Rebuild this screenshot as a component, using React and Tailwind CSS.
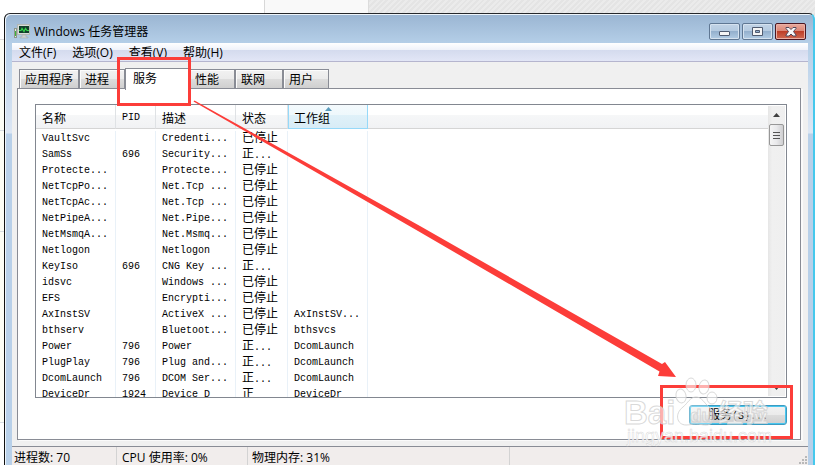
import React from "react";

const services = [
  ["VaultSvc", "", "Credenti...", "已停止", ""],
  ["SamSs", "696", "Security...", "正...", ""],
  ["Protecte...", "", "Protecte...", "已停止", ""],
  ["NetTcpPo...", "", "Net.Tcp ...", "已停止", ""],
  ["NetTcpAc...", "", "Net.Tcp ...", "已停止", ""],
  ["NetPipeA...", "", "Net.Pipe...", "已停止", ""],
  ["NetMsmqA...", "", "Net.Msmq...", "已停止", ""],
  ["Netlogon", "", "Netlogon", "已停止", ""],
  ["KeyIso", "696", "CNG Key ...", "正...", ""],
  ["idsvc", "", "Windows ...", "已停止", ""],
  ["EFS", "", "Encrypti...", "已停止", ""],
  ["AxInstSV", "", "ActiveX ...", "已停止", "AxInstSV..."],
  ["bthserv", "", "Bluetoot...", "已停止", "bthsvcs"],
  ["Power", "796", "Power", "正...", "DcomLaunch"],
  ["PlugPlay", "796", "Plug and...", "正...", "DcomLaunch"],
  ["DcomLaunch", "796", "DCOM Ser...", "正...", "DcomLaunch"],
  ["DeviceDr", "1924", "Device D", "正", "DeviceDr"],
];

const tabs = [
  { label: "应用程序", width: "w-[60px]" },
  { label: "进程", width: "w-[46px]" },
  { label: "服务", width: "w-[64px]", active: true },
  { label: "性能", width: "w-[46px]" },
  { label: "联网", width: "w-[48px]" },
  { label: "用户", width: "w-[46px]" },
];

function Backdrop() {
  return (
    <div className="absolute inset-0 bg-white">
      <div className="flex h-4">
        <div className="w-[264px] bg-white" />
        <div className="w-[104px] border-l border-[#d8d8d8] bg-[#f9f9f9]" />
        <div className="flex-1 border-l border-[#dcdcdc] bg-[repeating-linear-gradient(135deg,#e4e4e4_0px,#e4e4e4_2px,#ebebeb_2px,#ebebeb_4px)]" />
      </div>
      <div className="flex w-1 flex-col">
        <div className="h-6 border-b border-[#dddddd]" />
        <div className="h-[91px] border-b border-[#d8dde2] bg-[#fcfdf5]" />
        <div className="h-[101px] border-b border-[#d8dde2] bg-[#fcfdf5]" />
        <div className="h-[191px] border-b border-[#d8dde2] bg-[#fcfdf5]" />
      </div>
    </div>
  );
}

function AppIcon() {
  return (
    <svg width="17" height="15" viewBox="0 0 17 15" aria-hidden="true">
      <rect x="0.5" y="4.5" width="2" height="9" fill="#e5e9e2" stroke="#8d978c" />
      <rect x="1" y="7" width="1" height="5" fill="#3fb43b" />
      <rect x="3.5" y="0.5" width="12" height="10" fill="#d9dcd8" stroke="#b3b8b4" />
      <rect x="5" y="2" width="10" height="7" fill="#123f2b" />
      <path d="M5 6.5h2l1-2 2 3 1.5-3 1.5 2h2" fill="none" stroke="#35d24a" strokeWidth="1.2" />
      <path d="M8 11h4v2h2v1H6v-1h2z" fill="#cfd2d0" stroke="#a0a5a5" strokeWidth="0.5" />
    </svg>
  );
}

function CaptionButtons() {
  const base =
    "flex h-[17px] w-[31px] items-center justify-center rounded-[2px] border border-[#5f7793] bg-[linear-gradient(#c1d3e6_0%,#b4cae0_48%,#94b0cd_50%,#b2cce4_100%)] shadow-[inset_0_0_0_1px_#d5e2ef]";
  return (
    <div className="flex gap-[2px]">
      <button aria-label="最小化" className={base}>
        <svg width="12" height="10" viewBox="0 0 12 10">
          <rect x="0.5" y="4.5" width="10" height="4" rx="0.5" fill="#f5f5f5" stroke="#505b70" />
        </svg>
      </button>
      <button aria-label="最大化" className={base}>
        <svg width="12" height="10" viewBox="0 0 12 10">
          <path d="M.5.5h10v8H.5zM3.5 3.5v2h4v-2z" fill="#f5f5f5" fillRule="evenodd" stroke="#505b70" />
        </svg>
      </button>
      <button
        aria-label="关闭"
        className="flex h-[17px] w-[31px] items-center justify-center rounded-[2px] border border-[#4b1722] bg-[linear-gradient(#e9a99d_0%,#dc8777_45%,#bd3f29_50%,#cf6a52_100%)] shadow-[inset_0_0_0_1px_#eab0a5]"
      >
        <svg width="12" height="10" viewBox="0 0 12 10">
          <path
            d="M1 .5h3l2 2 2-2h3v1L8.5 4.500 11 8v1H8L6 7 4 9H1V8l2.500-3.500L1 1.500z"
            fill="#f8f8f8"
            stroke="#53485b"
          />
        </svg>
      </button>
    </div>
  );
}

function MenuBar() {
  return (
    <nav className="flex h-[19px] shrink-0 items-center gap-4 border-b border-[#b5b5ce] bg-[linear-gradient(#ffffff_0%,#eff2fa_38%,#d4dbee_40%,#e2e6f6_100%)] pl-[7px] font-['Open_Sans','Noto_Sans_CJK_SC',sans-serif]">
      {["文件(F)", "选项(O)", "查看(V)", "帮助(H)"].map((item) => (
        <button key={item} className="pt-[2px] leading-4 whitespace-nowrap">
          {item}
        </button>
      ))}
    </nav>
  );
}

function Tabs() {
  return (
    <div role="tablist" className="flex h-[21px] items-end pl-[2px]">
      {tabs.map((tab) => (
        <button
          key={tab.label}
          role="tab"
          aria-selected={Boolean(tab.active)}
          className={
            tab.active
              ? `${tab.width} relative -mb-[2px] flex h-[22px] items-start border border-b-0 border-[#898c95] bg-white pl-[7px] leading-[18px]`
              : `${tab.width} h-[19px] border border-b-0 border-[#898c95] bg-[linear-gradient(#f2f2f2_0%,#ebebeb_48%,#dddddd_50%,#cfcfcf_100%)] pl-[5px] text-left leading-[18px] shadow-[inset_1px_1px_0_#fcfcfc]`
          }
        >
          {tab.label}
        </button>
      ))}
    </div>
  );
}

function ServiceTable() {
  const head =
    "h-6 border-r border-b border-[#dfe2e5] border-b-[#d5d5d5] bg-[linear-gradient(#ffffff_0%,#ffffff_43%,#f6f7f8_45%,#f1f2f4_100%)] pt-[2px] pl-[6px] text-left font-normal";
  const cell = "h-4 overflow-hidden border-r border-[#e9f1f8] pl-[6px] whitespace-nowrap";
  return (
    <table className="w-full table-fixed border-separate border-spacing-0">
      <colgroup>
        <col className="w-[80px]" />
        <col className="w-[40px]" />
        <col className="w-[80px]" />
        <col className="w-[52px]" />
        <col className="w-[80px]" />
        <col />
      </colgroup>
      <thead>
        <tr>
          <th className={head}>名称</th>
          <th className={`${head} font-['Liberation_Mono',monospace] text-[10px]`}>PID</th>
          <th className={head}>描述</th>
          <th className={head}>状态</th>
          <th
            aria-sort="ascending"
            className="relative h-6 border-x border-b border-[#96d9f9] bg-[linear-gradient(#f4fafd_0%,#eef8fc_43%,#dff1f9_45%,#d8ecf6_100%)] pt-[2px] pl-[5px] text-left font-normal"
          >
            工作组
            <svg className="absolute top-[2px] left-[36px]" width="7" height="4" viewBox="0 0 7 4">
              <path d="M0 4 3.5 0 7 4z" fill="#5c9dbd" />
            </svg>
          </th>
          <th className="h-6 border-b border-[#d5d5d5] bg-[linear-gradient(#ffffff_0%,#ffffff_43%,#f6f7f8_45%,#f1f2f4_100%)]" />
        </tr>
      </thead>
      <tbody className="font-['Liberation_Mono','Noto_Sans_CJK_SC',monospace] text-[10px] leading-4">
        <tr aria-hidden="true">
          <td className="h-[2px]" colSpan={6} />
        </tr>
        {services.map((row) => (
          <tr key={row[0]}>
            <td className={cell}>{row[0]}</td>
            <td className={cell}>{row[1]}</td>
            <td className={cell}>{row[2]}</td>
            <td className={`${cell} leading-[15px]`}>
              <span className="text-[12px]">{row[3].replace("...", "")}</span>
              {row[3].endsWith("...") && "..."}
            </td>
            <td className={cell}>{row[4]}</td>
            <td />
          </tr>
        ))}
      </tbody>
    </table>
  );
}

function ScrollBar() {
  return (
    <div className="my-[1px] mr-[1px] flex w-[17px] shrink-0 flex-col items-center bg-[linear-gradient(90deg,#e6e6e6,#f0f0f0_25%,#efefef)]">
      <button aria-label="向上滚动" className="flex h-[18px] w-full items-center justify-center">
        <svg width="7" height="4" viewBox="0 0 7 4">
          <path d="M0 4 3.5 0 7 4z" fill="#404040" />
        </svg>
      </button>
      <div className="flex h-[22px] w-[15px] flex-col items-center justify-center gap-[2px] rounded-[2px] border border-[#979797] bg-[linear-gradient(90deg,#f5f5f5,#e9e9eb_50%,#cfcfd1)]">
        <div className="h-[1px] w-[7px] bg-[#555555]" />
        <div className="h-[1px] w-[7px] bg-[#555555]" />
        <div className="h-[1px] w-[7px] bg-[#555555]" />
      </div>
      <button aria-label="向下滚动" className="mt-auto flex h-[17px] w-full items-center justify-center">
        <svg width="7" height="4" viewBox="0 0 7 4">
          <path d="M0 0h7L3.5 4z" fill="#404040" />
        </svg>
      </button>
    </div>
  );
}

function StatusBar() {
  return (
    <footer className="flex h-[19px] shrink-0 border-t border-[#898c95] bg-[#f1edec] font-['Open_Sans','Noto_Sans_CJK_SC',sans-serif] leading-[22px] whitespace-nowrap">
      <div className="w-[105px] border-r border-[#d3d3d3] pl-[2px]">进程数: 70</div>
      <div className="w-[131px] border-r border-[#d3d3d3] pl-[5px]">CPU 使用率: 0%</div>
      <div className="w-[262px] border-r border-[#d3d3d3] pl-[4px]">物理内存: 31%</div>
      <svg className="mt-auto ml-auto" width="10" height="9" viewBox="0 0 10 9" fill="#b8b8b8">
        <path d="M7 0h2v2H7zM4 3h2v2H4zM7 3h2v2H7zM1 6h2v2H1zM4 6h2v2H4zM7 6h2v2H7z" />
      </svg>
    </footer>
  );
}

function Watermark() {
  return (
    <svg
      className="pointer-events-none absolute top-[374px] left-[620px]"
      width="160"
      height="76"
      viewBox="0 0 160 76"
      aria-hidden="true"
      fill="#ffffff"
      fillOpacity="0.6"
      stroke="#cfcfcf"
      strokeOpacity="0.8"
    >
      <text x="4" y="50" className="font-['Liberation_Sans',sans-serif] text-[33px] font-bold">
        Bai
      </text>
      <path
        d="M76 23c6 0 8 6 13 10 9 7 6 18-3 18-4 0-6-1-10-1s-6 1-10 1c-9 0-12-11-3-18 5-4 7-10 13-10z"
        fillOpacity="0.3"
      />
      <text
        x="70"
        y="48"
        fillOpacity="0.3"
        className="font-['Liberation_Sans',sans-serif] text-[19px] font-bold"
      >
        du
      </text>
      <text x="98" y="48" className="font-['Noto_Sans_CJK_SC',sans-serif] text-[25px] font-bold">
        经验
      </text>
      <text
        x="7"
        y="68"
        strokeWidth="0.5"
        fillOpacity="0.8"
        className="font-['Liberation_Sans',sans-serif] text-[18px]"
      >
        jingyan.baidu.com
      </text>
      <ellipse cx="71" cy="11" rx="5" ry="7" />
      <ellipse cx="84" cy="13" rx="5" ry="7" transform="rotate(10 84 13)" />
      <ellipse cx="61" cy="22" rx="5" ry="7" transform="rotate(-12 61 22)" />
      <ellipse cx="92" cy="24" rx="5" ry="6" />
    </svg>
  );
}

function Annotations() {
  return (
    <svg
      className="pointer-events-none absolute top-0 left-0"
      width="815"
      height="465"
      viewBox="0 0 815 465"
      fill="none"
      aria-hidden="true"
    >
      <rect x="118.500" y="58.500" width="71" height="46" stroke="#fc3d39" strokeWidth="3" />
      <rect x="661.500" y="386.500" width="130" height="51" stroke="#fc3d39" strokeWidth="3" />
      <path d="M193.500 101.500 194.500 100.500 420 226 662 364 665 362 676 377 658 376 659.500 371.500 418 231z" fill="#fc3d39" />
    </svg>
  );
}

export default function App() {
  return (
    <div className="relative h-screen w-full overflow-hidden font-['Noto_Sans_CJK_SC',sans-serif] text-[12px] text-black">
      <Backdrop />
      <div className="relative flex h-full flex-col pt-[13px] pl-1">
        <main className="flex min-h-0 flex-1 flex-col rounded-t-[6px] border-t border-l border-r-2 border-t-[#26282b] border-r-[#45c8ec] border-l-[#111111] bg-[linear-gradient(#9ab5d2_0px,#b5cfe8_30px,#dde7f4_119px,#b8d0e9_120px)] pr-[5px] pl-[7px] shadow-[inset_1px_1px_0_#eef5fb]">
          <header className="flex h-[29px] shrink-0 items-center pt-[6px] pr-[2px] pl-[2px]">
            <AppIcon />
            <h1 className="flex-1 pl-[3px] font-['Open_Sans','Noto_Sans_CJK_SC',sans-serif] text-[12px] leading-[18px] whitespace-nowrap">
              Windows 任务管理器
            </h1>
            <CaptionButtons />
          </header>
          <MenuBar />
          <div className="flex min-h-0 flex-1 flex-col bg-[#f0f0f0] pt-[5px] pr-[7px] pb-[6px] pl-[5px]">
            <Tabs />
            <section className="flex min-h-0 flex-1 flex-col border border-[#898c95] bg-white pt-[15px] pr-[13px] pb-[14px] pl-[17px] shadow-[2px_1px_0_#fafafa]">
              <div className="flex min-h-0 flex-1 border border-[#828790]">
                <div className="min-w-0 flex-1 overflow-hidden">
                  <ServiceTable />
                </div>
                <ScrollBar />
              </div>
              <div className="mt-[7px] flex justify-end">
                <button className="h-[20px] w-[98px] rounded-[3px] border border-[#3c9bc0] bg-[linear-gradient(#f2f2f2_0%,#ebebeb_48%,#dddddd_50%,#cfcfcf_100%)] leading-[16px] shadow-[inset_0_0_0_1px_#48c6ef]">
                  服务<span className="font-['Liberation_Mono',monospace] text-[10px]">(S)...</span>
                </button>
              </div>
            </section>
          </div>
          <StatusBar />
        </main>
      </div>
      <Annotations />
      <Watermark />
    </div>
  );
}
